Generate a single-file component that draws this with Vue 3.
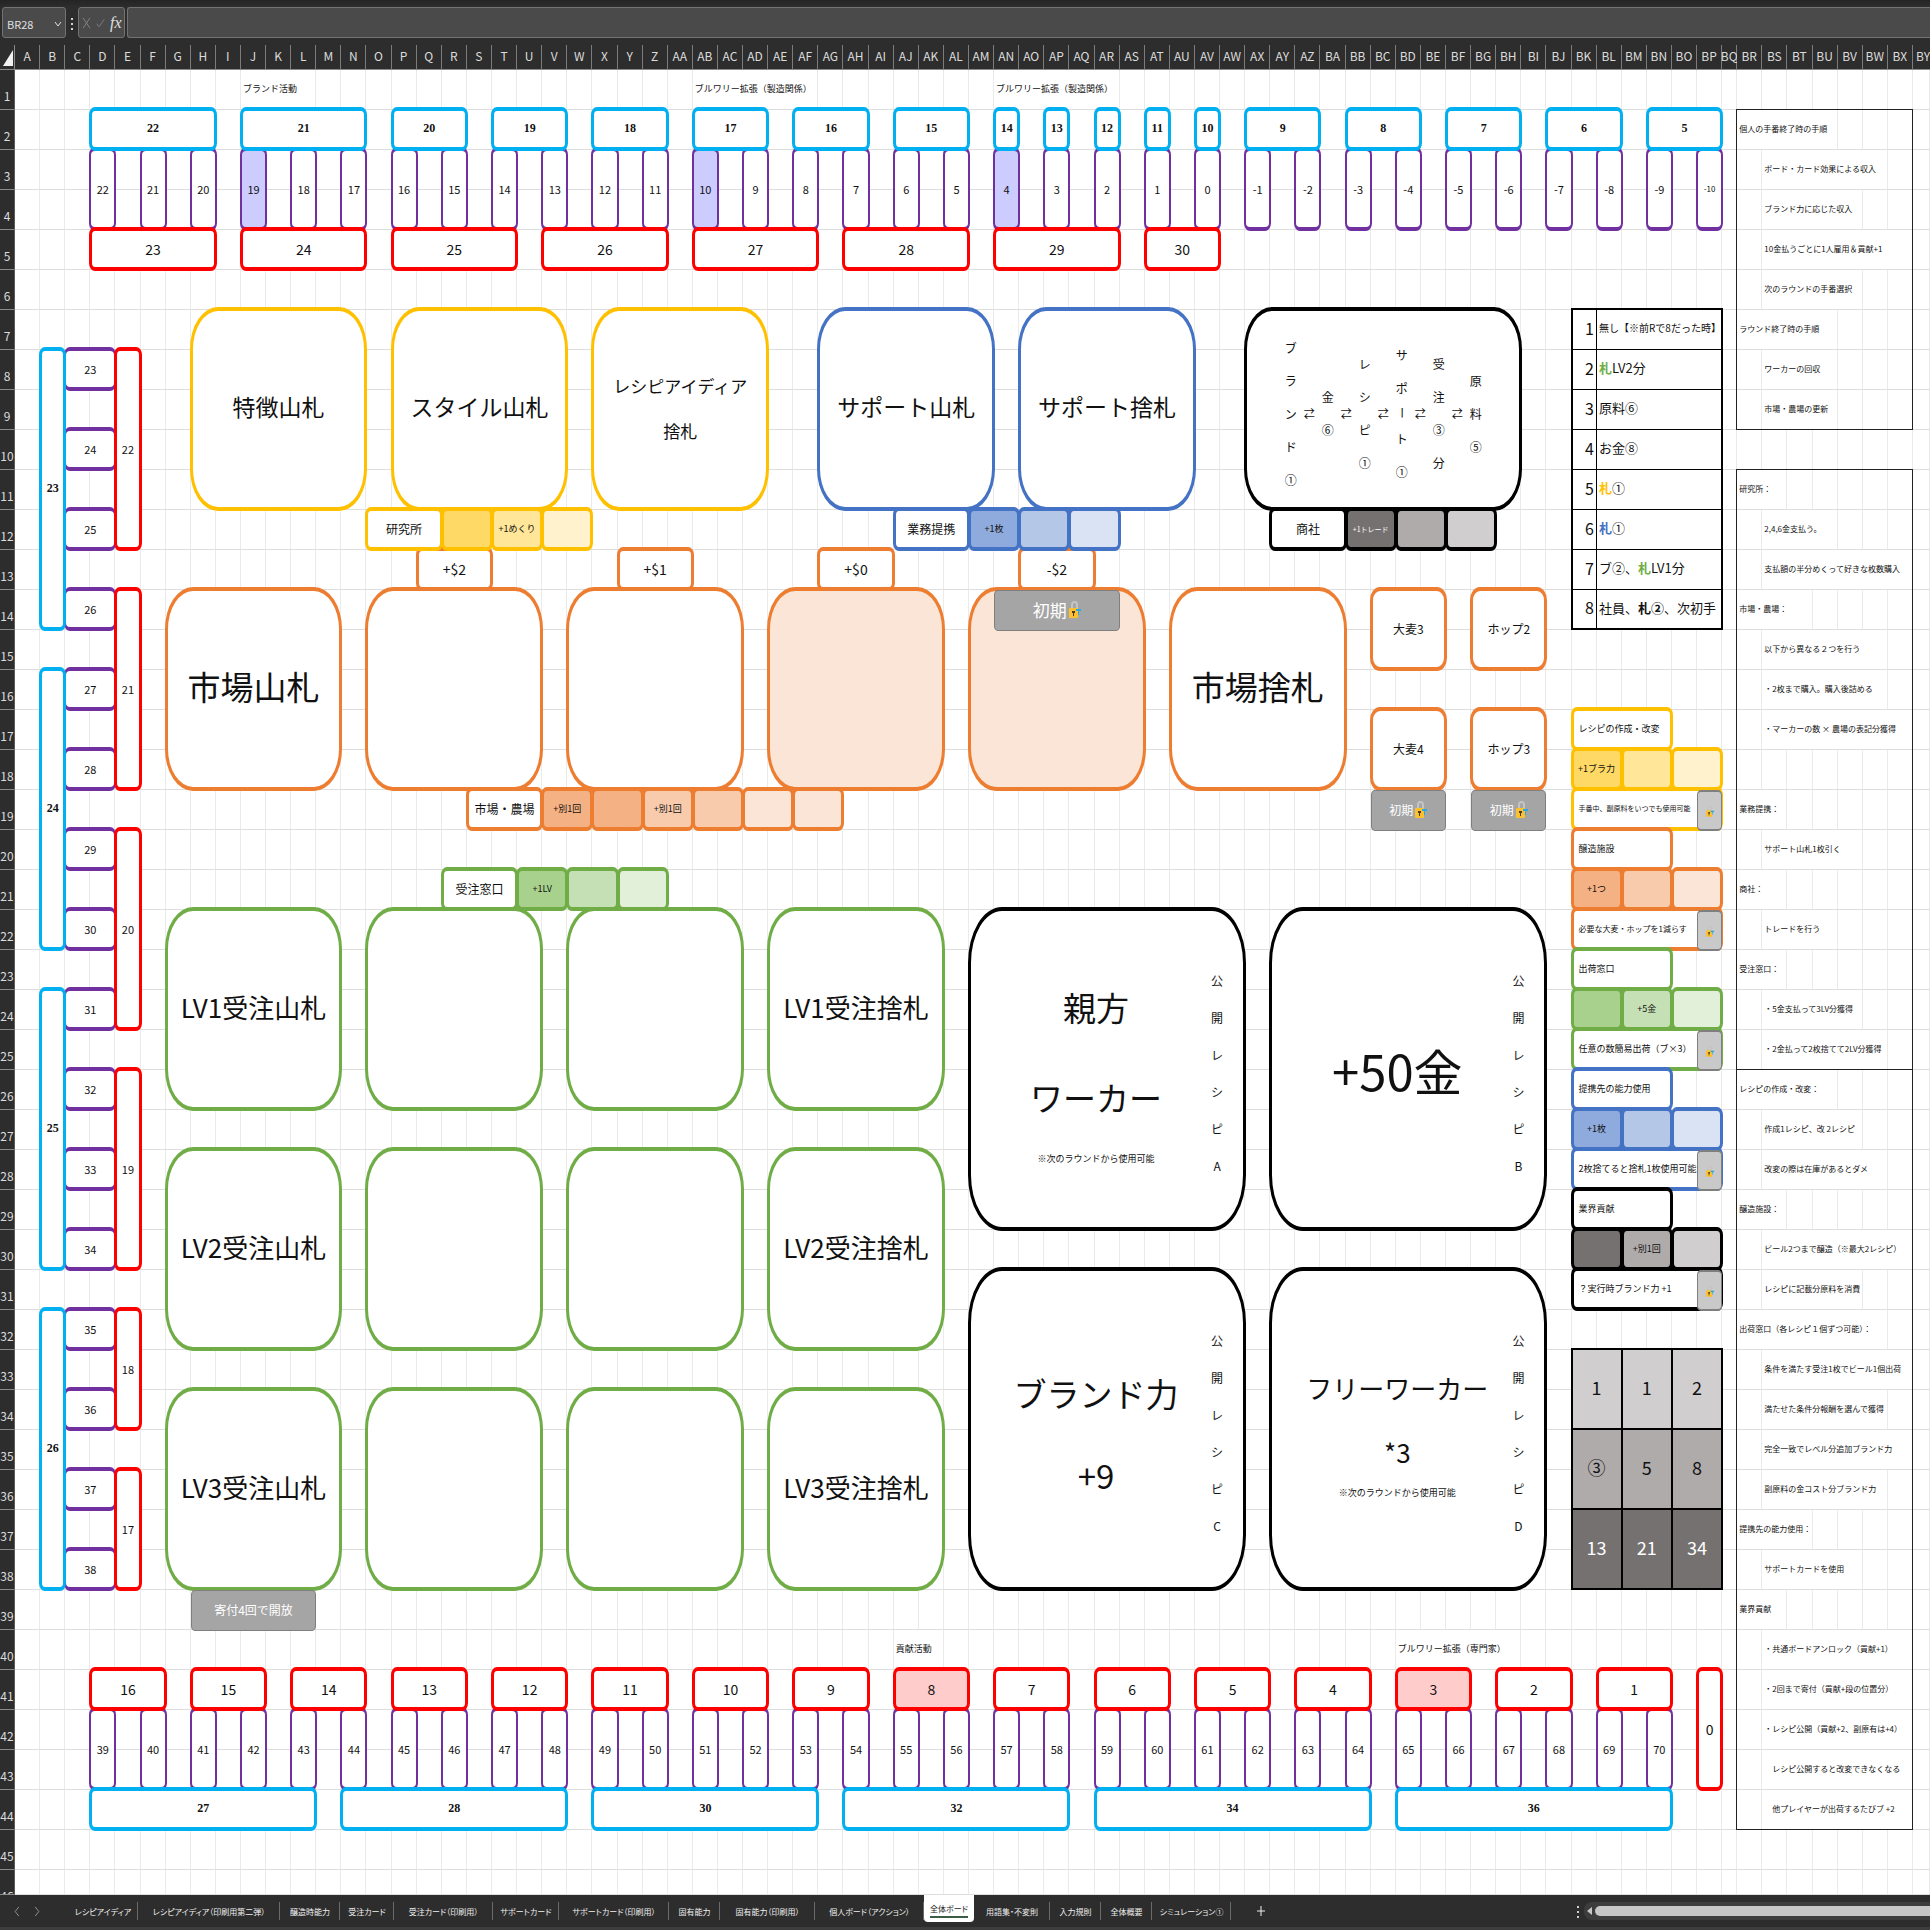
<template>
  <div class="app">
    <header class="formula-bar">
      <div class="name-box">
        <input class="name-input" aria-label="名前ボックス" :value="activeCell" />
        <button class="name-toggle" type="button" aria-label="名前の一覧">
          <svg viewBox="0 0 8 8"><path d="M1 2 L4 6 L7 2" /></svg>
        </button>
      </div>
      <span class="dots" aria-hidden="true"><i></i><i></i><i></i></span>
      <div class="fx-box">
        <button type="button" aria-label="キャンセル">
          <svg viewBox="0 0 10 14"><path d="M1 1 L9 13 M9 1 L1 13" /></svg>
        </button>
        <button type="button" aria-label="入力">
          <svg viewBox="0 0 12 14"><path d="M1 8 L4 12 L11 2" /></svg>
        </button>
        <button type="button" class="fx">fx</button>
      </div>
      <input class="formula-input" aria-label="数式バー" />
    </header>

    <main class="sheet">
      <!-- 見出し -->
      <div class="corner"><svg viewBox="0 0 10 16"><path d="M10 0 V16 H0 Z" /></svg></div>
      <div
        v-for="(name, i) in columns"
        :key="'c' + name"
        class="col-head"
        :class="{ 'col-head--cut': i === columns.length - 1 }"
        :style="{ gridColumn: i + 2 }"
      >{{ name }}</div>
      <div v-for="n in ROWS" :key="'r' + n" class="row-head" :style="{ gridRow: n + 1 }">{{ n }}</div>

      <!-- 罫線 -->
      <div v-for="(name, i) in columns" :key="'v' + name" class="line-v" :style="{ gridColumn: i + 2 }"></div>
      <div v-for="n in ROWS" :key="'h' + n" class="line-h" :style="{ gridRow: n + 1 }"></div>

      <!-- セルの文字 -->
      <div v-for="t in captions" :key="t.at" class="caption" :style="area(t.at)">{{ t.text }}</div>
      <div v-for="n in notes" :key="n.at" class="note" :style="area(n.at)">{{ n.text }}</div>
      <div v-for="p in panels" :key="p" class="panel" :style="area(p)"></div>

      <table class="actions" :style="area('BK7:BP14')">
        <tbody>
          <tr v-for="(parts, i) in actions" :key="i">
            <td class="actions-no">{{ i + 1 }}</td>
            <td class="actions-text" :class="{ 'actions-text--small': i === 0 }">
              <span v-for="(p, k) in parts" :key="k" :class="p[1]">{{ p[0] }}</span>
            </td>
          </tr>
        </tbody>
      </table>

      <table class="costs" :style="area('BK33:BP38')">
        <tbody>
          <tr v-for="(row, i) in costs" :key="i" :class="'costs-' + (i + 1)">
            <td v-for="(v, k) in row" :key="k">{{ v }}</td>
          </tr>
        </tbody>
      </table>

      <!-- 図形 -->
      <div
        v-for="s in shapes"
        :key="s.at + s.kind"
        class="shape"
        :class="['shape--' + s.kind, s.tone, s.fill && 'fill-' + s.fill, s.size && 'text-' + s.size]"
        :style="area(s.at)"
      >
        <span v-if="s.text">{{ s.text }}</span>
        <svg v-if="s.lock" class="lock" viewBox="0 0 12 18">
          <path class="lock-shackle" d="M3 9 V4 Q3 1 5.500 1 Q8 1 8 4 V9" />
          <rect class="lock-body" x="0" y="7" width="9" height="10" rx="1" />
          <path class="lock-hole" d="M3 10 H6 V12 H5 V15 H4 V12 H3 Z" />
          <path class="lock-key" d="M7 8 H12 V10 H10 V14 H9 V10 H7 Z" />
        </svg>
      </div>

      <div class="shape shape--card black exchange" :style="area('AX7:BH11')">
        <template v-for="(word, i) in exchange" :key="word">
          <span v-if="i" class="arrow">⇄</span>
          <span class="stack"><b v-for="(ch, k) in word" :key="k" :class="{ bar: ch === 'ー' }">{{ ch }}</b></span>
        </template>
      </div>

      <section v-for="r in rewards" :key="r.id" class="shape shape--card black reward" :style="area(r.at)">
        <div class="reward-main" :class="'reward-main--' + r.kind">
          <p v-for="line in r.lines" :key="line">{{ line }}</p>
          <small v-if="r.note">{{ r.note }}</small>
        </div>
        <div class="reward-side"><b v-for="(ch, k) in '公開レシピ' + r.id" :key="k">{{ ch }}</b></div>
      </section>
    </main>

    <footer class="tab-bar">
      <nav class="arrows">
        <button type="button" aria-label="前のシート"><svg viewBox="0 0 6 12"><path d="M5 1 L1 6 L5 11" /></svg></button>
        <button type="button" aria-label="次のシート"><svg viewBox="0 0 6 12"><path d="M1 1 L5 6 L1 11" /></svg></button>
      </nav>
      <div class="tabs">
        <button
          v-for="tab in tabs"
          :key="tab.name"
          type="button"
          class="tab"
          :class="{ 'tab--active': tab.name === activeTab }"
          :style="{ width: tab.width + 'px' }"
          @click="activeTab = tab.name"
        ><span>{{ tab.name }}</span></button>
        <button type="button" class="add" aria-label="新しいシート">
          <svg viewBox="0 0 8 12"><path d="M4 1 V11 M0 6 H8" /></svg>
        </button>
      </div>
      <span class="dots" aria-hidden="true"><i></i><i></i><i></i></span>
      <div class="scroll">
        <svg viewBox="0 0 5 8"><path d="M5 0 V8 L0 4 Z" /></svg>
        <div class="thumb"></div>
      </div>
    </footer>
  </div>
</template>

<script setup>
import { ref } from 'vue'

const ROWS = 46
const COLS = 77

const activeCell = ref('BR28')
const activeTab = ref('全体ボード')

// 1 -> A, 27 -> AA
const colName = (n) => {
  const first = Math.floor((n - 1) / 26)
  const last = String.fromCharCode(65 + ((n - 1) % 26))
  return first ? String.fromCharCode(64 + first) + last : last
}

const colIndex = (name) => [...name].reduce((sum, ch) => sum * 26 + ch.charCodeAt(0) - 64, 0)

const columns = Array.from({ length: COLS }, (_, i) => colName(i + 1))

// 'D2:H2' -> grid の配置。見出しの行と列があるので 1 つずらす
const area = (range) => {
  const [from, to = from] = range.split(':')
  const [, c1, r1] = from.match(/([A-Z]+)(\d+)/)
  const [, c2, r2] = to.match(/([A-Z]+)(\d+)/)
  return {
    gridColumn: `${colIndex(c1) + 1} / ${colIndex(c2) + 2}`,
    gridRow: `${Number(r1) + 1} / ${Number(r2) + 2}`,
  }
}

const box = (kind, tone, at, text = '', extra = {}) => ({ kind, tone, at, text: String(text), ...extra })

const captions = [
  { at: 'J1:L1', text: 'ブランド活動' },
  { at: 'AB1:AF1', text: 'ブルワリー拡張（製造関係）' },
  { at: 'AN1:AR1', text: 'ブルワリー拡張（製造関係）' },
  { at: 'AJ40:AK40', text: '貢献活動' },
  { at: 'BD40:BH40', text: 'ブルワリー拡張（専門家）' },
]

const notes = [
  { at: 'BR2:BU2', text: '個人の手番終了時の手順' },
  { at: 'BS3:BW3', text: 'ボード・カード効果による収入' },
  { at: 'BS4:BV4', text: 'ブランド力に応じた収入' },
  { at: 'BS5:BX5', text: '10金払うごとに1人雇用＆貢献+1' },
  { at: 'BS6:BV6', text: '次のラウンドの手番選択' },
  { at: 'BR7:BU7', text: 'ラウンド終了時の手順' },
  { at: 'BS8:BU8', text: 'ワーカーの回収' },
  { at: 'BS9:BU9', text: '市場・農場の更新' },
  { at: 'BR11:BS11', text: '研究所：' },
  { at: 'BS12:BU12', text: '2,4,6金支払う。' },
  { at: 'BS13:BX13', text: '支払額の半分めくって好きな枚数購入' },
  { at: 'BR14:BT14', text: '市場・農場：' },
  { at: 'BS15:BW15', text: '以下から異なる２つを行う' },
  { at: 'BS16:BW16', text: '・2枚まで購入。購入後詰める' },
  { at: 'BS17:BX17', text: '・マーカーの数 × 農場の表記分獲得' },
  { at: 'BR19:BS19', text: '業務提携：' },
  { at: 'BS20:BV20', text: 'サポート山札1枚引く' },
  { at: 'BR21:BS21', text: '商社：' },
  { at: 'BS22:BU22', text: 'トレードを行う' },
  { at: 'BR23:BS23', text: '受注窓口：' },
  { at: 'BS24:BV24', text: '・5金支払って3LV分獲得' },
  { at: 'BS25:BW25', text: '・2金払って2枚捨てて2LV分獲得' },
  { at: 'BR26:BU26', text: 'レシピの作成・改変：' },
  { at: 'BS27:BV27', text: '作成1レシピ、改 2レシピ' },
  { at: 'BS28:BW28', text: '改変の際は在庫があるとダメ' },
  { at: 'BR29:BS29', text: '醸造施設：' },
  { at: 'BS30:BX30', text: 'ビール2つまで醸造（※最大2レシピ）' },
  { at: 'BS31:BV31', text: 'レシピに記載分原料を消費' },
  { at: 'BR32:BW32', text: '出荷窓口（各レシピ１個ずつ可能）：' },
  { at: 'BS33:BX33', text: '条件を満たす受注1枚でビール1個出荷' },
  { at: 'BS34:BW34', text: '満たせた条件分報酬を選んで獲得' },
  { at: 'BS35:BX35', text: '完全一致でレベル分追加ブランド力' },
  { at: 'BS36:BW36', text: '副原料の金コスト分ブランド力' },
  { at: 'BR37:BT37', text: '提携先の能力使用：' },
  { at: 'BS38:BV38', text: 'サポートカードを使用' },
  { at: 'BR39:BS39', text: '業界貢献' },
  { at: 'BS40:BX40', text: '・共通ボードアンロック（貢献+1）' },
  { at: 'BS41:BX41', text: '・2回まで寄付（貢献+段の位置分）' },
  { at: 'BS42:BX42', text: '・レシピ公開（貢献+2、副原有は+4）' },
  { at: 'BS43:BX43', text: '　レシピ公開すると改変できなくなる' },
  { at: 'BS44:BX44', text: '　他プレイヤーが出荷するたびブ +2' },
]

const panels = ['BR2:BX9', 'BR11:BX25', 'BR26:BX44']

const actions = [
  [['無し【※前Rで8だった時】']],
  [['札', 'is-green'], ['LV2分']],
  [['原料⑥']],
  [['お金⑧']],
  [['札', 'is-gold'], ['①']],
  [['札', 'is-blue'], ['①']],
  [['ブ②、'], ['札', 'is-green'], ['LV1分']],
  [['社員、'], ['札②', 'is-bold'], ['、次初手']],
]

const costs = [
  ['1', '1', '2'],
  ['③', '5', '8'],
  ['13', '21', '34'],
]

// 外周トラック
const purple = []
for (let i = 0; i < 33; i++) {
  const col = colName(4 + i * 2)
  const value = 22 - i
  purple.push(box('step', 'purple', `${col}3:${col}4`, value, {
    fill: [19, 10, 4].includes(value) ? 'lilac' : '',
    size: value === -10 ? 'small' : '',
  }))
}
for (let i = 0; i < 16; i++) {
  purple.push(box('step', 'purple', `C${8 + i * 2}:D${8 + i * 2}`, 23 + i))
}
for (let i = 0; i < 32; i++) {
  const col = colName(4 + i * 2)
  purple.push(box('step', 'purple', `${col}42:${col}43`, 39 + i))
}

const cyan = [
  ['D2:H2', 22], ['J2:N2', 21], ['P2:R2', 20], ['T2:V2', 19], ['X2:Z2', 18],
  ['AB2:AD2', 17], ['AF2:AH2', 16], ['AJ2:AL2', 15], ['AN2', 14], ['AP2', 13],
  ['AR2', 12], ['AT2', 11], ['AV2', 10], ['AX2:AZ2', 9], ['BB2:BD2', 8],
  ['BF2:BH2', 7], ['BJ2:BL2', 6], ['BN2:BP2', 5],
  ['B8:B14', 23], ['B16:B22', 24], ['B24:B30', 25], ['B32:B38', 26],
  ['D44:L44', 27], ['N44:V44', 28], ['X44:AF44', 30], ['AH44:AP44', 32],
  ['AR44:BB44', 34], ['BD44:BN44', 36],
].map(([at, text]) => box('track', 'cyan', at, text))

const red = [
  ['D5:H5', 23], ['J5:N5', 24], ['P5:T5', 25], ['V5:Z5', 26], ['AB5:AF5', 27],
  ['AH5:AL5', 28], ['AN5:AR5', 29], ['AT5:AV5', 30], ['BP41:BP43', 0],
].map(([at, text]) => box('track', 'red', at, text))
for (let i = 0; i < 16; i++) {
  const value = 16 - i
  const at = `${colName(4 + i * 4)}41:${colName(6 + i * 4)}41`
  red.push(box('track', 'red', at, value, { fill: [8, 3].includes(value) ? 'rose' : '' }))
}
const redSide = [
  ['E8:E12', 22], ['E14:E18', 21], ['E20:E24', 20], ['E26:E30', 19], ['E32:E34', 18], ['E36:E38', 17],
].map(([at, text]) => box('step', 'red', at, text))

// 山札・捨札
const cards = [
  box('card', 'gold', 'H7:N11', '特徴山札'),
  box('card', 'gold', 'P7:V11', 'スタイル山札'),
  box('card', 'gold', 'X7:AD11', 'レシピアイディア\n捨札', { size: 'idea' }),
  box('card', 'blue', 'AG7:AM11', 'サポート山札'),
  box('card', 'blue', 'AO7:AU11', 'サポート捨札'),
  box('card', 'orange', 'G14:M18', '市場山札', { size: 'market' }),
  box('card', 'orange', 'O14:U18'),
  box('card', 'orange', 'W14:AC18'),
  box('card', 'orange', 'AE14:AK18', '', { fill: 3 }),
  box('card', 'orange', 'AM14:AS18', '', { fill: 3 }),
  box('card', 'orange', 'AU14:BA18', '市場捨札', { size: 'market' }),
  box('crop', 'orange', 'BC14:BE15', '大麦3'),
  box('crop', 'orange', 'BG14:BI15', 'ホップ2'),
  box('crop', 'orange', 'BC17:BE18', '大麦4'),
  box('crop', 'orange', 'BG17:BI18', 'ホップ3'),
]
for (const level of [1, 2, 3]) {
  const top = 16 + level * 6
  const rows = (from, to) => `${from}${top}:${to}${top + 4}`
  cards.push(
    box('card', 'green', rows('G', 'M'), `LV${level}受注山札`, { size: 'order' }),
    box('card', 'green', rows('O', 'U')),
    box('card', 'green', rows('W', 'AC')),
    box('card', 'green', rows('AE', 'AK'), `LV${level}受注捨札`, { size: 'order' }),
  )
}

const prices = [
  ['Q13:S13', '+$2'], ['Y13:AA13', '+$1'], ['AG13:AI13', '+$0'], ['AO13:AQ13', '-$2'],
].map(([at, text]) => box('track', 'orange', at, text))

// 見出し + 段階マス(2列ずつ)
const upgrade = (tone, row, start, width, title, tiles) => {
  const list = [box('title', tone, `${colName(start)}${row}:${colName(start + width - 1)}${row}`, title)]
  tiles.forEach(([fill, text], i) => {
    const c = start + width + i * 2
    list.push(box('tile', tone, `${colName(c)}${row}:${colName(c + 1)}${row}`, text, { fill }))
  })
  return list.reverse()
}

const upgrades = [
  ...upgrade('gold', 12, colIndex('O'), 3, '研究所', [[1], [2, '+1めくり'], [3]]),
  ...upgrade('blue', 12, colIndex('AJ'), 3, '業務提携', [[1, '+1枚'], [2], [3]]),
  ...upgrade('black', 12, colIndex('AY'), 3, '商社', [[1, '+1トレード'], [2], [3]]),
  ...upgrade('orange', 19, colIndex('S'), 3, '市場・農場', [[1, '+別1回'], [1], [2, '+別1回'], [2], [3], [3]]),
  ...upgrade('green', 21, colIndex('R'), 3, '受注窓口', [[1, '+1LV'], [2], [3]]),
]

const facility = (tone, row, title, tiles, effect, size) => [
  box('label', tone, `BK${row}:BN${row}`, title),
  ...[3, 2, 1].map((fill) => {
    const c = colIndex('BK') + (fill - 1) * 2
    return box('tile', tone, `${colName(c)}${row + 1}:${colName(c + 1)}${row + 1}`, tiles[fill - 1], { fill })
  }),
  box('label', tone, `BK${row + 2}:BP${row + 2}`, effect, { size }),
  box('seal', 'gray', `BP${row + 2}`, '', { lock: true }),
]

const facilities = [
  ...facility('gold', 17, 'レシピの作成・改変', ['+1ブラ力', '', ''], '手番中、副原料をいつでも使用可能', 'mini'),
  ...facility('orange', 20, '醸造施設', ['+1つ', '', ''], '必要な大麦・ホップを1減らす', 'small'),
  ...facility('green', 23, '出荷窓口', ['', '+5金', ''], '任意の数簡易出荷（ブ×3）'),
  ...facility('blue', 26, '提携先の能力使用', ['+1枚', '', ''], '2枚捨てると捨札1枚使用可能'),
  ...facility('black', 29, '業界貢献', ['', '+別1回', ''], '？実行時ブランド力 +1'),
]

const badges = [
  box('badge', 'gray', 'AN14:AR14', '初期', { lock: true, size: 'badge' }),
  box('badge', 'gray', 'BC19:BE19', '初期', { lock: true }),
  box('badge', 'gray', 'BG19:BI19', '初期', { lock: true }),
  box('badge', 'gray', 'H39:L39', '寄付4回で開放'),
]

const shapes = [...purple, ...cyan, ...red, ...redSide, ...prices, ...cards, ...upgrades, ...facilities, ...badges]

const exchange = ['ブランド①', '金⑥', 'レシピ①', 'サポート①', '受注③分', '原料⑤']

const rewards = [
  { id: 'A', at: 'AM22:AW29', kind: 'wide', lines: ['親方', 'ワーカー'], note: '※次のラウンドから使用可能' },
  { id: 'B', at: 'AY22:BI29', kind: 'huge', lines: ['+50金'] },
  { id: 'C', at: 'AM31:AW38', kind: 'brand', lines: ['ブランド力', '+9'] },
  { id: 'D', at: 'AY31:BI38', kind: 'free', lines: ['フリーワーカー', '*3'], note: '※次のラウンドから使用可能' },
]

const tabs = [
  { name: 'レシピアイディア', width: 70 },
  { name: 'レシピアイディア（印刷用第二弾）', width: 142 },
  { name: '醸造時能力', width: 60 },
  { name: '受注カード', width: 54 },
  { name: '受注カード（印刷用）', width: 99 },
  { name: 'サポートカード', width: 66 },
  { name: 'サポートカード（印刷用）', width: 110 },
  { name: '固有能力', width: 51 },
  { name: '固有能力（印刷用）', width: 95 },
  { name: '個人ボード（アクション）', width: 109 },
  { name: '全体ボード', width: 50 },
  { name: '用語集・不変則', width: 76 },
  { name: '入力規則', width: 51 },
  { name: '全体概要', width: 51 },
  { name: 'シミュレーション①', width: 79 },
]
</script>

<style>
body {
  margin: 0;
  background: #2d2d2d;
}
</style>

<style scoped>
.app {
  display: flex;
  flex-direction: column;
  min-height: 100vh;
  background: #fff;
  color: #111;
  font-family: "Noto Sans CJK JP", "Noto Sans", sans-serif;
  overflow: hidden;
}

.app * {
  box-sizing: border-box;
}

button,
input {
  margin: 0;
  padding: 0;
  border: 0;
  background: none;
  color: inherit;
  font: inherit;
}

svg {
  display: block;
  fill: none;
  stroke: currentColor;
}

/* 数式バー */
.formula-bar {
  display: flex;
  align-items: flex-start;
  height: 45px;
  padding: 7px 0 0 2px;
  background: linear-gradient(#242424, #2d2d2d 7px);
  color: #e0e0e0;
}

.name-box,
.fx-box,
.formula-input {
  height: 31px;
  border: 1px solid #737373;
  border-radius: 3px;
  background: #4a4a4a;
}

.name-box {
  display: flex;
  align-items: center;
  width: 64px;
  padding: 2px 3px 0 4px;
}

.name-input {
  flex: 1;
  min-width: 0;
  font-size: 11px;
}

.name-toggle svg {
  width: 8px;
  height: 8px;
}

.dots {
  display: flex;
  flex-direction: column;
  gap: 3px;
  padding: 11px 5px 0;
}

.dots i {
  width: 2px;
  height: 2px;
  background: #d0d0d0;
}

.fx-box {
  display: flex;
  align-items: center;
  gap: 5px;
  width: 47px;
  padding: 0 3px;
  color: #8a8a8a;
}

.fx-box svg {
  width: 9px;
  height: 12px;
}

.fx-box .fx {
  color: #e0e0e0;
  font: italic 16px "Liberation Serif", serif;
}

.formula-input {
  flex: 1;
  margin-left: 2px;
  padding: 0 6px;
  border-right: 0;
  border-radius: 3px 0 0 3px;
}

/* シート */
.sheet {
  flex: 1;
  display: grid;
  grid-template-columns:
    15px repeat(68, minmax(0, 25fr)) minmax(0, 15fr) repeat(7, minmax(0, 25fr)) minmax(0, 17fr);
  grid-template-rows: 25px repeat(45, 40px) 25px;
  background: #fff;
  overflow: hidden;
}

.corner,
.col-head,
.row-head {
  background: #2d2d2d;
  color: #dcdcdc;
}

.corner {
  grid-area: 1 / 1;
  padding: 5px 2px 4px 3px;
  border-right: 1px solid #8a8a8a;
  border-bottom: 1px solid #8a8a8a;
}

.corner svg {
  width: 10px;
  height: 16px;
  fill: #f2f2f2;
  stroke: none;
}

.col-head {
  display: flex;
  justify-content: center;
  grid-row: 1;
  border-right: 1px solid #7c7c7c;
  border-bottom: 1px solid #8a8a8a;
  font-size: 12px;
  line-height: 22px;
}

.col-head--cut {
  justify-content: flex-start;
  padding-left: 3px;
  border-right: 0;
}

.row-head {
  grid-column: 1;
  padding-top: 19px;
  border-right: 1px solid #5a5a5a;
  border-bottom: 1px solid #8a8a8a;
  font-size: 12px;
  line-height: 14px;
  text-align: center;
  overflow: hidden;
}

.line-v {
  grid-row: 2 / -1;
  border-right: 1px solid #ebebeb;
}

.line-h {
  grid-column: 2 / -1;
  border-bottom: 1px solid #dedede;
}

.caption,
.note {
  margin: 0 1px 1px 0;
  background: #fff;
  white-space: nowrap;
}

.caption {
  padding-left: 2px;
  font-size: 9px;
  line-height: 37px;
}

.note {
  padding-left: 2px;
  font-size: 8px;
  line-height: 38px;
}

.panel {
  margin: -1px 0 0 -1px;
  border: 1px solid #222;
}

/* 表 */
.actions,
.costs {
  width: calc(100% + 2px);
  height: calc(100% + 2px);
  margin: -2px -1px -1px;
  border-collapse: collapse;
  table-layout: fixed;
  background: #fff;
}

.actions {
  border: 2px solid #000;
}

.actions td {
  height: 40px;
  padding: 0 2px 3px;
  border: 1px solid #000;
  white-space: nowrap;
}

.actions .actions-no {
  width: 25px;
  font-size: 16px;
  text-align: right;
}

.actions .actions-text {
  font-size: 13px;
}

.actions .actions-text--small {
  font-size: 10px;
}

.is-green,
.is-gold,
.is-blue,
.is-bold {
  font-weight: bold;
}

.is-green {
  color: #70ad47;
}

.is-gold {
  color: #ffc000;
}

.is-blue {
  color: #4472c4;
}

.costs td {
  padding: 0 0 4px;
  border: 2px solid #000;
  font-size: 18px;
  text-align: center;
}

.costs-1 {
  background: #d0cece;
}

.costs-2 {
  background: #afabab;
}

.costs-3 {
  background: #767171;
  color: #fff;
}

/* 図形 */
.shape {
  display: flex;
  align-items: center;
  justify-content: center;
  margin: -3px -1px -1px;
  padding-bottom: 1px;
  border: 3px solid;
  border-width: 4px 3px;
  border-radius: 6px / 8px;
  background: #fff;
  white-space: pre;
  text-align: center;
}

.shape > span,
.reward p,
.reward small,
.reward-side,
.stack,
.arrow {
  color: #111;
}

.shape--step {
  font-size: 11px;
}

.shape--step.purple {
  border-width: 4px 2px;
}

.shape--track {
  font-size: 14px;
}

.shape--track.cyan {
  font-family: "Liberation Serif", serif;
  font-size: 12px;
  font-weight: bold;
}

.shape--card {
  padding-bottom: 6px;
  border-radius: 28px / 42px;
  font-size: 23px;
}

.shape--crop {
  border-radius: 10px / 13px;
  font-size: 12px;
}

.shape--title {
  font-size: 12px;
}

.shape--tile {
  font-size: 9px;
}

.shape--label {
  justify-content: flex-start;
  padding-bottom: 2px;
  padding-left: 5px;
  font-size: 9px;
}

.shape--badge,
.shape--seal {
  margin: 0 0 -1px;
  padding-bottom: 2px;
  border: 1px solid #7f7f7f;
  border-radius: 4px / 5px;
  background: #a5a5a5;
  font-size: 12px;
}

.shape--badge > span {
  color: #fff;
}

.shape--seal {
  border-width: 2px 1px;
  background: #c9c9c9;
}

.lock {
  width: 12px;
  height: 18px;
  margin-left: 2px;
}

.shape--seal .lock {
  width: 8px;
  height: 13px;
  margin: 4px 0 0;
}

.lock-shackle {
  stroke: #c4c4c4;
  stroke-width: 2;
}

.lock-body {
  fill: #fdc02f;
  stroke: none;
}

.lock-hole {
  fill: #4a3b22;
  stroke: none;
}

.lock-key {
  fill: #29a9e0;
  stroke: none;
}

.text-idea {
  padding-bottom: 2px;
  font-size: 17px;
  line-height: 45px;
}

.text-market {
  font-size: 33px;
}

.text-order {
  font-size: 26px;
}

.text-badge {
  font-size: 17px;
}

.text-mini {
  font-size: 7px;
}

.text-small {
  font-size: 8px;
}

.cyan {
  border-color: #00b0f0;
}

.purple {
  border-color: #7030a0;
}

.red {
  border-color: #f00;
}

.gold {
  border-color: #ffc000;
}

.orange {
  border-color: #ed7d31;
}

.green {
  border-color: #70ad47;
}

.blue {
  border-color: #4472c4;
}

.black {
  border-color: #000;
}

.fill-lilac {
  background: #ccf;
}

.fill-rose {
  background: #fcc;
}

.gold.fill-1 {
  background: #ffd966;
}

.gold.fill-2 {
  background: #ffe699;
}

.gold.fill-3 {
  background: #fff2cc;
}

.orange.fill-1 {
  background: #f4b183;
}

.orange.fill-2 {
  background: #f8cbad;
}

.orange.fill-3 {
  background: #fbe5d6;
}

.green.fill-1 {
  background: #a9d18e;
}

.green.fill-2 {
  background: #c5e0b4;
}

.green.fill-3 {
  background: #e2f0d9;
}

.blue.fill-1 {
  background: #8faadc;
}

.blue.fill-2 {
  background: #b4c7e7;
}

.blue.fill-3 {
  background: #dae3f3;
}

.black.fill-1 {
  background: #767171;
  font-size: 7px;
}

.black.fill-1 > span {
  color: #fff;
}

.black.fill-2 {
  background: #afabab;
}

.black.fill-3 {
  background: #d0cece;
}

.exchange {
  padding: 8px 0 0;
  font-size: 12px;
}

.stack,
.reward-side {
  display: flex;
  flex-direction: column;
}

.stack b,
.reward-side b {
  font-weight: normal;
}

.stack {
  width: 18px;
  line-height: 33px;
}

.stack .bar {
  height: 18px;
  writing-mode: vertical-rl;
  line-height: 18px;
  text-align: center;
}

.arrow {
  width: 19px;
  font-size: 11px;
}

.reward {
  padding-bottom: 0;
  border-radius: 34px / 56px;
}

.reward-main {
  flex: 1;
  padding-left: 10px;
}

.reward p {
  margin: 0;
}

.reward small {
  display: block;
  font-size: 9px;
}

.reward-side {
  margin-right: 20px;
  padding-top: 8px;
  font-size: 12px;
  line-height: 37px;
}

.reward-main--wide {
  font-size: 33px;
  line-height: 90px;
}

.reward-main--wide small {
  line-height: 34px;
}

.reward-main--huge {
  font-size: 49px;
}

.reward-main--brand {
  padding-top: 10px;
  font-size: 33px;
  line-height: 82px;
}

.reward-main--free {
  font-size: 26px;
  line-height: 64px;
}

.reward-main--free small {
  line-height: 18px;
}

/* シート見出し */
.tab-bar {
  display: flex;
  height: 35px;
  border-bottom: 3px solid #3d3d3d;
  background: #2d2d2d;
  color: #f0f0f0;
}

.arrows {
  display: flex;
  align-items: center;
  gap: 14px;
  width: 68px;
  padding-left: 14px;
  color: #9a9a9a;
}

.arrows svg {
  width: 6px;
  height: 11px;
}

.tabs {
  display: flex;
  flex: 1;
  font-size: 8px;
  font-feature-settings: "palt";
}

.tab {
  position: relative;
  padding-top: 1px;
  white-space: nowrap;
}

.tab::after {
  content: "";
  position: absolute;
  top: 7px;
  right: 0;
  width: 1px;
  height: 18px;
  background: #6a6a6a;
}

.tab--active {
  height: 27px;
  padding: 0;
  border-radius: 0 0 4px 4px;
  background: #fff;
  color: #222;
}

.tab--active span {
  padding-bottom: 2px;
  border-bottom: 2px solid #3b5b47;
}

.tab--active::after {
  display: none;
}

.add {
  width: 60px;
}

.add svg {
  width: 8px;
  height: 12px;
  margin: 0 auto;
}

.scroll {
  display: flex;
  align-items: center;
  width: 346px;
  height: 18px;
  margin-top: 7px;
  padding-left: 3px;
  border-radius: 8px 0 0 8px;
  background: #3d3d3d;
}

.scroll svg {
  width: 5px;
  height: 8px;
  fill: #c8c8c8;
  stroke: none;
}

.thumb {
  flex: 1;
  height: 10px;
  margin-left: 3px;
  border-radius: 5px 0 0 5px;
  background: #c6c6c6;
}
</style>
